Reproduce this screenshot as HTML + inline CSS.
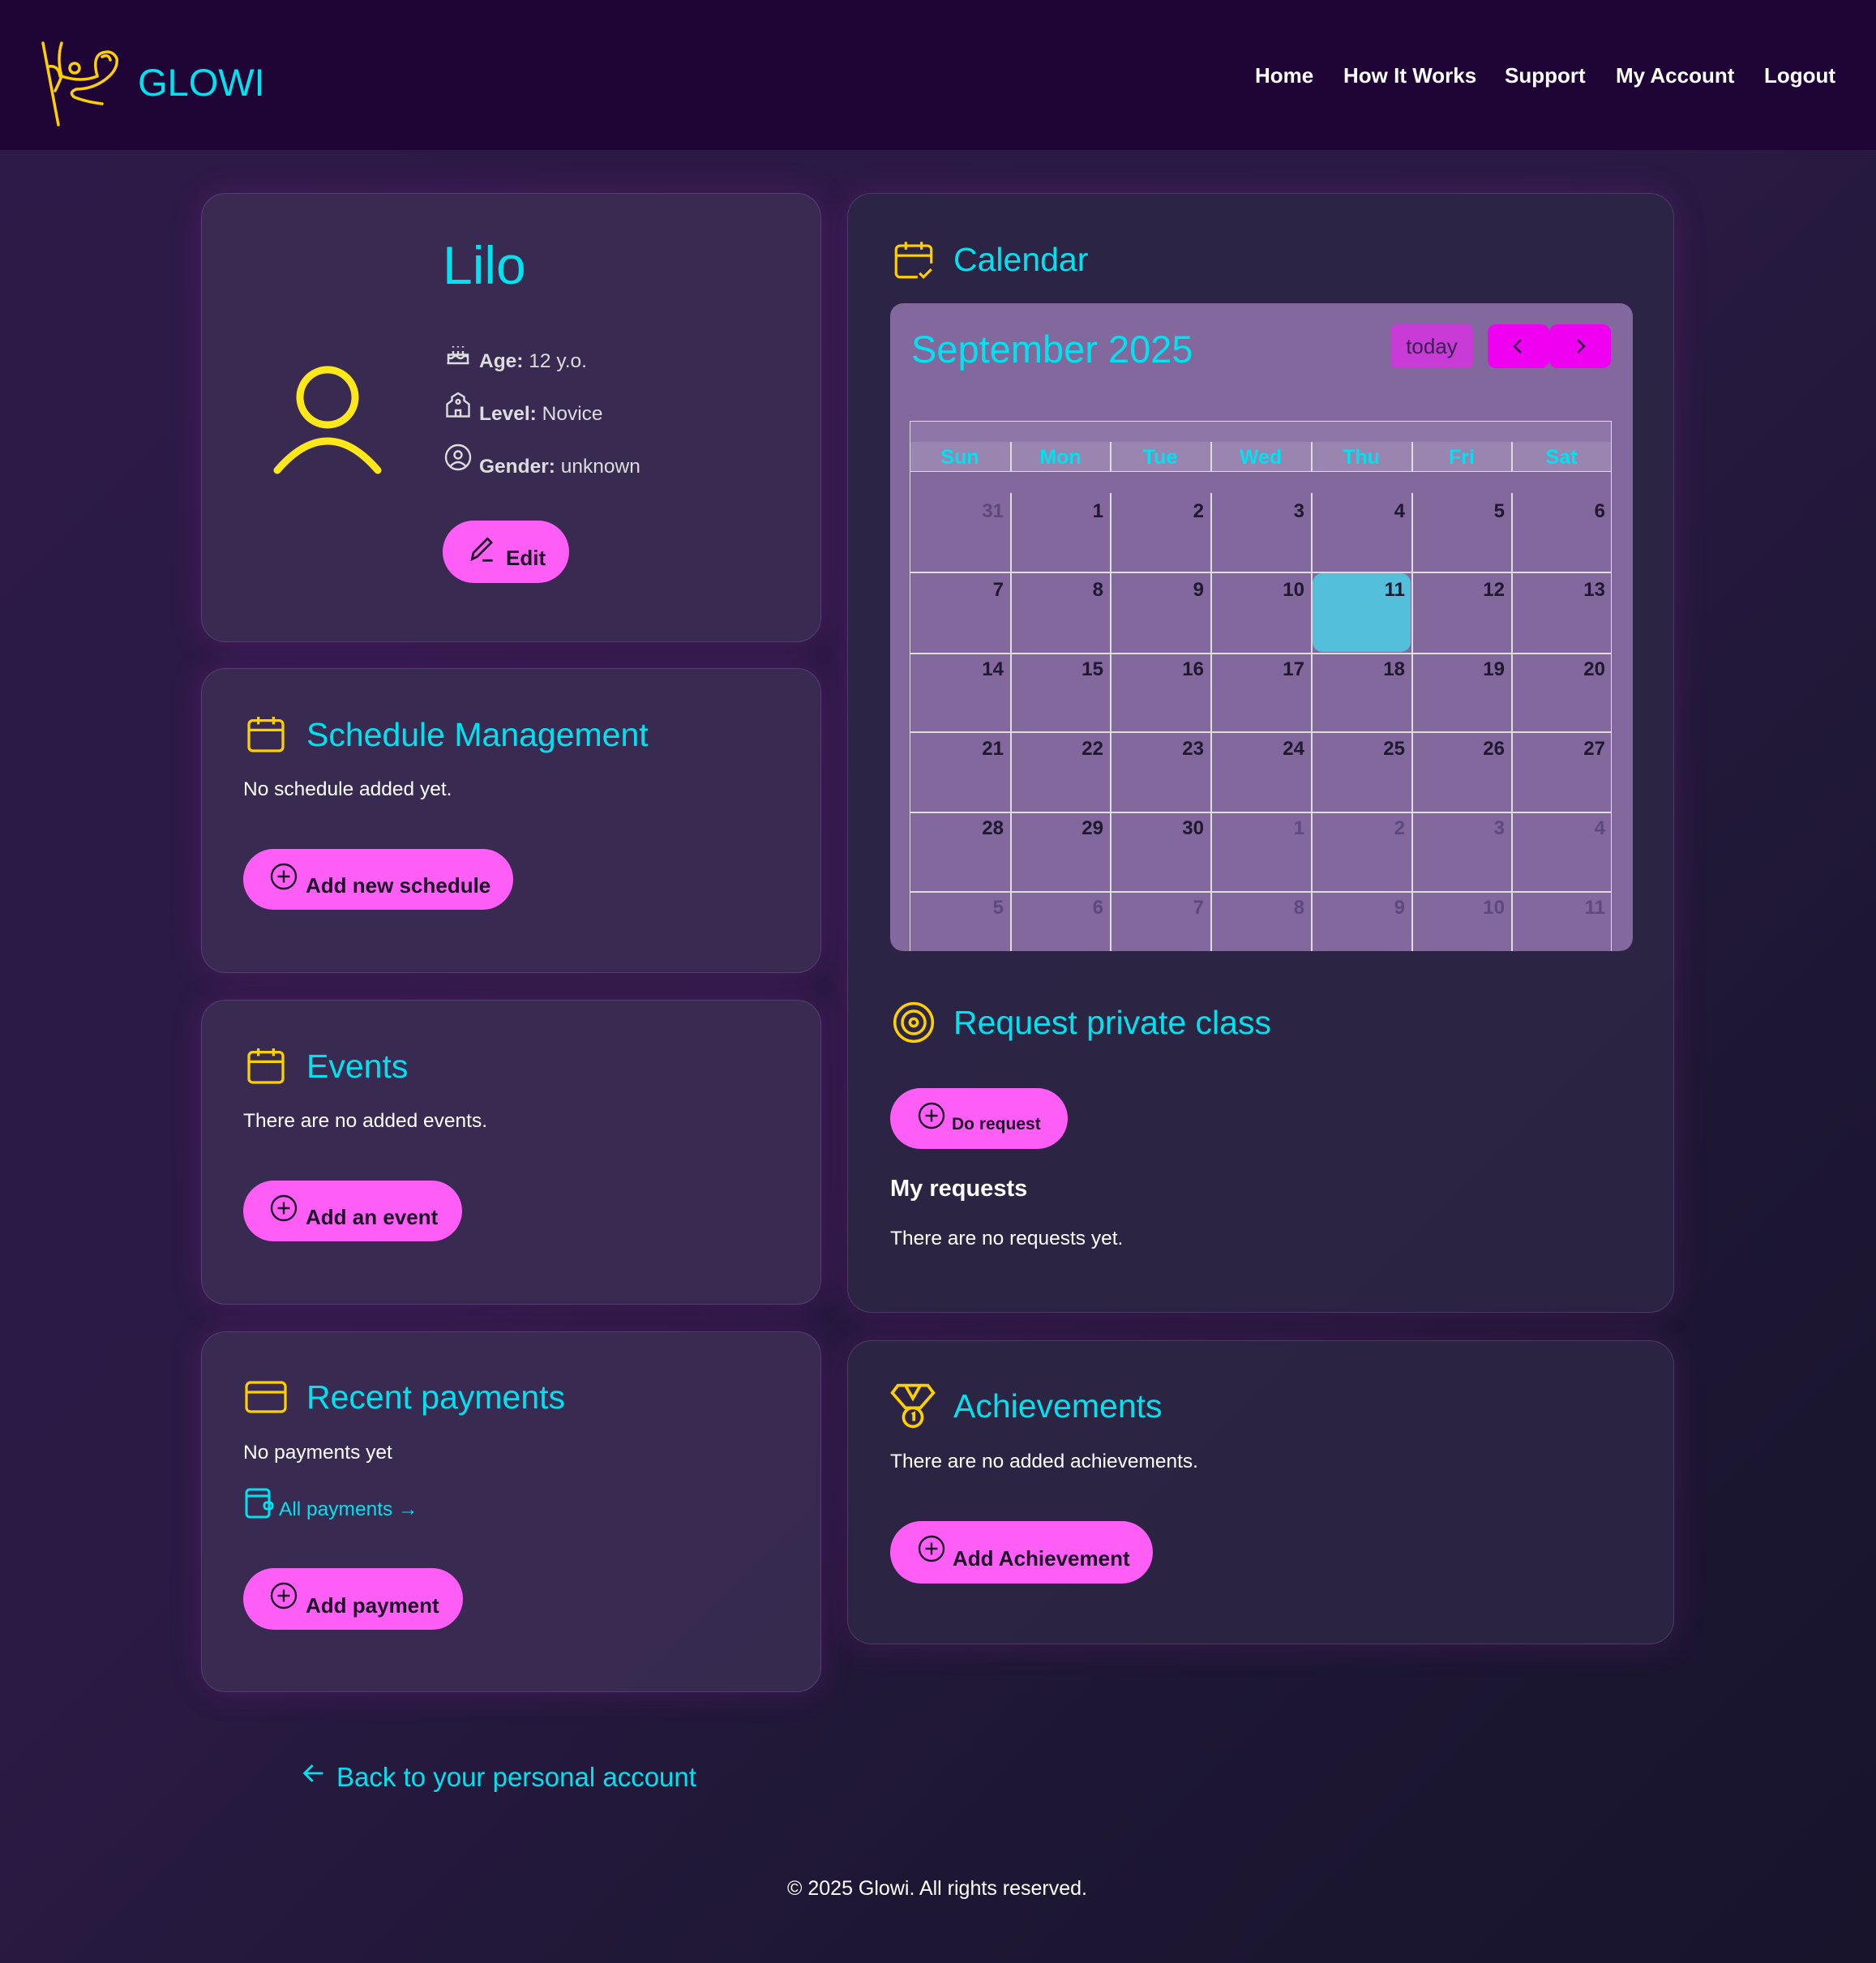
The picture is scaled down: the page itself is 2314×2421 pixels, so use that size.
<!DOCTYPE html>
<html><head><meta charset="utf-8"><style>
*{margin:0;padding:0;box-sizing:border-box}
body{width:2314px;height:2421px;overflow:hidden;font-family:"Liberation Sans",sans-serif;color:#fff;
background:linear-gradient(135deg,#2e1a48 0%,#2a1a44 45%,#1d1733 75%,#18142c 100%);position:relative}
.hdr{position:absolute;left:0;top:0;width:2314px;height:185px;background:#1e0536}
.a{position:absolute;white-space:nowrap}
.card{position:absolute;border-radius:30px;background:rgba(62,48,86,.78);border:1.5px solid rgba(160,120,200,.28);box-shadow:0 0 40px rgba(200,40,200,.18)}
.rc{background:rgba(44,38,68,.88)}
.cy{color:#00e2ef}
.h2{font-size:41px;line-height:50px}
.t{font-size:24.5px;line-height:30px}
.btn{position:absolute;background:#ff5ef6;border-radius:40px;color:#1c1028;font-weight:bold;font-size:26px}
.btn span{position:absolute;white-space:nowrap}
.nav{font-weight:bold;font-size:26px;line-height:30px;top:78px}
.cal{position:absolute;left:1098px;top:374px;width:916px;height:799px;background:#82689c;border-radius:16px;overflow:hidden}
.num{position:absolute;font-weight:bold;font-size:24px;color:#1f1830;text-align:right;width:110px}
.o{color:#5e4a7a}
</style></head><body>
<div class="hdr"></div>
<svg class="a" style="left:50px;top:50px" width="110" height="110" viewBox="0 0 110 110" fill="none" stroke="#ffd000" stroke-width="3.5" stroke-linecap="round">
<path d="M3 3 L22 104"/><path d="M10 32 Q22 30 24 44"/><path d="M26 3 Q20 22 26 44 Q22 54 18 62"/><circle cx="42" cy="34" r="6"/><path d="M26 44 Q50 52 70 44"/><path d="M70 44 Q64 22 74 16 Q88 10 94 22 Q96 36 80 48 Q64 60 44 60 Q34 64 42 70 Q58 76 76 78"/><path d="M76 20 Q84 16 86 24"/></svg>
<div class="a cy" style="left:170px;top:74px;font-size:47px;line-height:56px">GLOWI</div>
<div class="a nav" style="left:1548px">Home</div>
<div class="a nav" style="left:1657px">How It Works</div>
<div class="a nav" style="left:1856px">Support</div>
<div class="a nav" style="left:1993px">My Account</div>
<div class="a nav" style="left:2176px">Logout</div>

<!-- profile -->
<div class="card" style="left:248px;top:238px;width:765px;height:554px"></div>
<svg class="a" style="left:334px;top:448px" width="140" height="140" viewBox="0 0 140 140" fill="none" stroke="#ffe81a" stroke-width="9" stroke-linecap="round"><circle cx="70" cy="42" r="34"/><path d="M8 132 Q70 60 132 132"/></svg>
<div class="a cy" style="left:546px;top:288px;font-size:66px;line-height:78px">Lilo</div>
<svg class="a" style="left:547px;top:418px" width="36" height="36" viewBox="0 0 24 24" fill="none" stroke="#ddd" stroke-width="1.6"><path d="M3 20h18M4 20v-7h16v7M4 15q2 2 4 0t4 0 4 0 4 0M8 10v3M12 10v3M16 10v3M8 6v1M12 6v1M16 6v1"/></svg>
<div class="a t" style="left:591px;top:431px;color:#ddd"><b>Age:</b> 12 y.o.</div>
<svg class="a" style="left:547px;top:482px" width="36" height="36" viewBox="0 0 24 24" fill="none" stroke="#ddd" stroke-width="1.6"><path d="M3 21V11l4-3V5l5-3 5 3v3l4 3v10zM10 21v-5h4v5"/><circle cx="12" cy="9" r="1.6"/></svg>
<div class="a t" style="left:591px;top:496px;color:#ddd"><b>Level:</b> Novice</div>
<svg class="a" style="left:547px;top:546px" width="36" height="36" viewBox="0 0 24 24" fill="none" stroke="#ddd" stroke-width="1.6"><circle cx="12" cy="12" r="10"/><circle cx="12" cy="10" r="3"/><path d="M6 19q6-6 12 0"/></svg>
<div class="a t" style="left:591px;top:561px;color:#ddd"><b>Gender:</b> unknown</div>
<div class="btn" style="left:546px;top:642px;width:156px;height:77px"><svg class="a" style="left:30px;top:16px" width="38" height="38" viewBox="0 0 24 24" fill="none" stroke="#1c1028" stroke-width="1.7"><path d="M4 20l1-5L16 4l3 3L8 18zM12 21h8"/></svg><span style="left:78px;top:31px">Edit</span></div>

<!-- schedule -->
<div class="card" style="left:248px;top:824px;width:765px;height:376px"></div>
<svg class="a" style="left:300px;top:876px" width="56" height="58" viewBox="0 0 24 24" fill="none" stroke="#ffd000" stroke-width="1.4"><rect x="3" y="5" width="18" height="16" rx="2"/><path d="M3 10h18M8 3v4M16 3v4"/></svg>
<div class="a cy h2" style="left:378px;top:881px">Schedule Management</div>
<div class="a t" style="left:300px;top:959px">No schedule added yet.</div>
<div class="btn" style="left:300px;top:1047px;width:333px;height:75px"><svg class="a" style="left:32px;top:16px" width="36" height="36" viewBox="0 0 24 24" fill="none" stroke="#1c1028" stroke-width="1.6"><circle cx="12" cy="12" r="10"/><path d="M12 7v10M7 12h10"/></svg><span style="left:77px;top:30px">Add new schedule</span></div>

<!-- events -->
<div class="card" style="left:248px;top:1233px;width:765px;height:376px"></div>
<svg class="a" style="left:300px;top:1285px" width="56" height="58" viewBox="0 0 24 24" fill="none" stroke="#ffd000" stroke-width="1.4"><rect x="3" y="5" width="18" height="16" rx="2"/><path d="M3 10h18M8 3v4M16 3v4M8 14h.01M12 14h.01M16 14h.01M8 17h.01M12 17h.01M16 17h.01"/></svg>
<div class="a cy h2" style="left:378px;top:1290px">Events</div>
<div class="a t" style="left:300px;top:1368px">There are no added events.</div>
<div class="btn" style="left:300px;top:1456px;width:270px;height:75px"><svg class="a" style="left:32px;top:16px" width="36" height="36" viewBox="0 0 24 24" fill="none" stroke="#1c1028" stroke-width="1.6"><circle cx="12" cy="12" r="10"/><path d="M12 7v10M7 12h10"/></svg><span style="left:77px;top:30px">Add an event</span></div>

<!-- payments -->
<div class="card" style="left:248px;top:1642px;width:765px;height:445px"></div>
<svg class="a" style="left:302px;top:1703px" width="52" height="40" viewBox="0 0 26 20" fill="none" stroke="#ffd000" stroke-width="1.6"><rect x="1" y="1" width="24" height="18" rx="2.5"/><path d="M1 7h24"/></svg>
<div class="a cy h2" style="left:378px;top:1698px">Recent payments</div>
<div class="a t" style="left:300px;top:1777px">No payments yet</div>
<svg class="a" style="left:302px;top:1833px" width="36" height="40" viewBox="0 0 18 20" fill="none" stroke="#00e2ef" stroke-width="1.5"><rect x="1" y="2" width="14" height="17" rx="2"/><path d="M1 6h14"/><rect x="12" y="10" width="5" height="4" rx="1.5"/></svg>
<div class="a t cy" style="left:344px;top:1847px">All payments →</div>
<div class="btn" style="left:300px;top:1934px;width:271px;height:76px"><svg class="a" style="left:32px;top:16px" width="36" height="36" viewBox="0 0 24 24" fill="none" stroke="#1c1028" stroke-width="1.6"><circle cx="12" cy="12" r="10"/><path d="M12 7v10M7 12h10"/></svg><span style="left:77px;top:31px">Add payment</span></div>

<!-- calendar card -->
<div class="card rc" style="left:1045px;top:238px;width:1020px;height:1381px"></div>
<svg class="a" style="left:1098px;top:290px" width="58" height="60" viewBox="0 0 24 24" fill="none" stroke="#ffd000" stroke-width="1.3"><path d="M14 21H5a2 2 0 0 1-2-2V7a2 2 0 0 1 2-2h14a2 2 0 0 1 2 2v7M3 10h18M8 3v4M16 3v4M15 19l2 2 4-4"/></svg>
<div class="a cy h2" style="left:1176px;top:295px">Calendar</div>
<div class="cal">
<div class="a cy" style="left:26px;top:29px;font-size:47px;line-height:56px">September 2025</div>
<div class="a" style="left:617px;top:26px;width:102px;height:54px;background:#c93bd6;border-radius:8px;color:#3a2050;font-size:26px;text-align:center;line-height:54px">today</div>
<div class="a" style="left:737px;top:26px;width:76px;height:54px;background:#f000f0;border-radius:10px"><svg class="a" style="left:26px;top:15px" width="24" height="24" viewBox="0 0 24 24" fill="none" stroke="#2a1040" stroke-width="2.4"><path d="M15 4l-8 8 8 8"/></svg></div>
<div class="a" style="left:813px;top:26px;width:76px;height:54px;background:#f000f0;border-radius:10px"><svg class="a" style="left:26px;top:15px" width="24" height="24" viewBox="0 0 24 24" fill="none" stroke="#2a1040" stroke-width="2.4"><path d="M9 4l8 8-8 8"/></svg></div>
<div class="a" style="left:24px;top:145px;width:866px;height:654px;border:1.5px solid #ddd;border-bottom:none"></div>
<div class="a" style="left:25px;top:146px;width:864px;height:25px;background:#8e76a8"></div>
<div class="a" style="left:25px;top:171px;width:864px;height:37px;background:#9a84b0;border-bottom:1.5px solid #ddd"></div>
<div id="g"></div>
</div>

<div class="a cy h2" style="left:1176px;top:1236px">Request private class</div>
<svg class="a" style="left:1099px;top:1233px" width="56" height="56" viewBox="0 0 24 24" fill="none" stroke="#ffd000" stroke-width="1.5"><circle cx="12" cy="12" r="10"/><circle cx="12" cy="12" r="6"/><circle cx="12" cy="12" r="2"/></svg>
<div class="btn" style="left:1098px;top:1342px;width:219px;height:75px"><svg class="a" style="left:33px;top:16px" width="36" height="36" viewBox="0 0 24 24" fill="none" stroke="#1c1028" stroke-width="1.6"><circle cx="12" cy="12" r="10"/><path d="M12 7v10M7 12h10"/></svg><span style="left:76px;top:33px;font-size:21px">Do request</span></div>
<div class="a" style="left:1098px;top:1449px;font-size:29px;font-weight:bold;line-height:34px">My requests</div>
<div class="a t" style="left:1098px;top:1513px">There are no requests yet.</div>

<!-- achievements -->
<div class="card rc" style="left:1045px;top:1653px;width:1020px;height:375px"></div>
<svg class="a" style="left:1098px;top:1704px" width="56" height="60" viewBox="0 0 24 26" fill="none" stroke="#ffd000" stroke-width="1.6"><path d="M4 2h16l3 4-7 8H8L1 6zM8 2l4 7 4-7"/><circle cx="12" cy="19" r="5"/><path d="M11.5 17.5l1-.5v4"/></svg>
<div class="a cy h2" style="left:1176px;top:1709px">Achievements</div>
<div class="a t" style="left:1098px;top:1788px">There are no added achievements.</div>
<div class="btn" style="left:1098px;top:1876px;width:324px;height:77px"><svg class="a" style="left:33px;top:16px" width="36" height="36" viewBox="0 0 24 24" fill="none" stroke="#1c1028" stroke-width="1.6"><circle cx="12" cy="12" r="10"/><path d="M12 7v10M7 12h10"/></svg><span style="left:77px;top:31px">Add Achievement</span></div>

<svg class="a" style="left:370px;top:2170px" width="34" height="34" viewBox="0 0 24 24" fill="none" stroke="#00e2ef" stroke-width="2"><path d="M20 12H5M11 5l-7 7 7 7"/></svg>
<div class="a cy" style="left:415px;top:2172px;font-size:33px;line-height:40px">Back to your personal account</div>
<div class="a" style="left:0;width:2314px;text-align:center;top:2314px;font-size:25px;line-height:30px;padding-right:2px">© 2025 Glowi. All rights reserved.</div>

<script>
(function(){
var g=document.getElementById('g'),h='';
var x0=24,cw=866/7;
var lines=[331,431,528,627,725];
lines.forEach(function(y){h+='<div class="a" style="left:24px;top:'+y+'px;width:866px;height:1.5px;background:#ddd"></div>';});
for(var c=1;c<7;c++){var x=Math.round(x0+c*cw);
h+='<div class="a" style="left:'+x+'px;top:171px;width:1.5px;height:37px;background:#ddd"></div>';
h+='<div class="a" style="left:'+x+'px;top:234px;width:1.5px;height:570px;background:#ddd"></div>';}
var names=['Sun','Mon','Tue','Wed','Thu','Fri','Sat'];
names.forEach(function(n,i){h+='<div class="a" style="left:'+Math.round(x0+i*cw)+'px;width:'+Math.round(cw)+'px;text-align:center;top:175px;font-size:25px;font-weight:bold;color:#00e2ef;line-height:30px">'+n+'</div>';});
h+='<div class="a" style="left:'+Math.round(x0+4*cw+2)+'px;top:333px;width:'+Math.round(cw-3)+'px;height:97px;background:#53bfdb;border-radius:12px"></div>';
var days=[];days.push([31,1]);for(var d=1;d<=30;d++)days.push([d,0]);for(d=1;d<=11;d++)days.push([d,1]);
var tops=[243,340,438,536,634,732];
days.forEach(function(v,i){var r=Math.floor(i/7),c=i%7;
h+='<div class="num'+(v[1]?' o':'')+'" style="left:'+Math.round(x0+(c+1)*cw-118)+'px;top:'+tops[r]+'px">'+v[0]+'</div>';});
g.innerHTML=h;})();
</script>
</body></html>
